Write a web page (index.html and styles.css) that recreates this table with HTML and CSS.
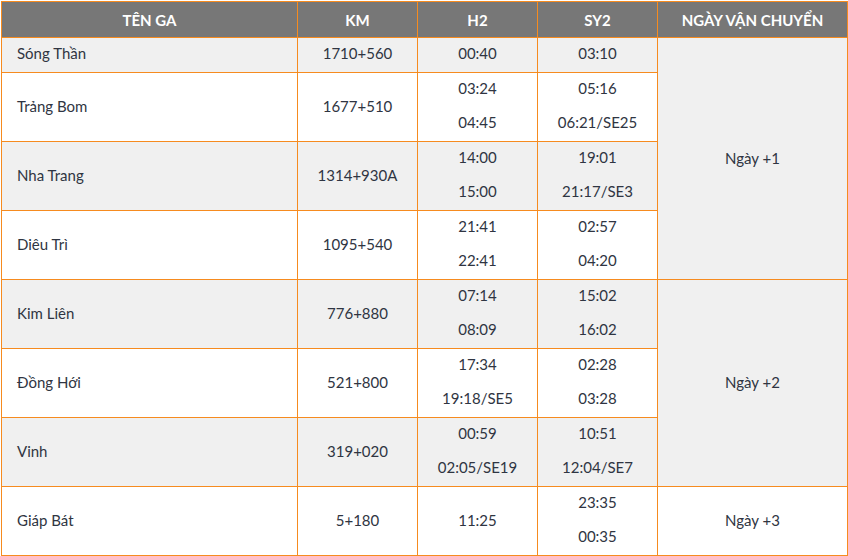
FILE: index.html
```html
<!DOCTYPE html>
<html lang="vi">
<head>
<meta charset="utf-8">
<link rel="stylesheet" href="styles.css">
</head>
<body>
<table class="schedule">
  <colgroup>
    <col class="c-name"><col class="c-km"><col class="c-t"><col class="c-t"><col class="c-day">
  </colgroup>
  <thead>
    <tr><th>TÊN GA</th><th>KM</th><th>H2</th><th>SY2</th><th>NGÀY VẬN CHUYỂN</th></tr>
  </thead>
  <tbody>
    <tr class="gray first">
      <td class="name multi"><div class="ln">Sóng Thần</div></td>
      <td class="multi"><div class="ln">1710+560</div></td>
      <td class="multi"><div class="ln">00:40</div></td>
      <td class="multi"><div class="ln">03:10</div></td>
      <td rowspan="4" class="day">Ngày +1</td>
    </tr>
    <tr>
      <td class="name">Trảng Bom</td>
      <td>1677+510</td>
      <td class="multi"><div class="ln">03:24</div><div class="ln">04:45</div></td>
      <td class="multi"><div class="ln">05:16</div><div class="ln">06:21/SE25</div></td>
    </tr>
    <tr class="gray">
      <td class="name">Nha Trang</td>
      <td>1314+930A</td>
      <td class="multi"><div class="ln">14:00</div><div class="ln">15:00</div></td>
      <td class="multi"><div class="ln">19:01</div><div class="ln">21:17/SE3</div></td>
    </tr>
    <tr>
      <td class="name">Diêu Trì</td>
      <td>1095+540</td>
      <td class="multi"><div class="ln">21:41</div><div class="ln">22:41</div></td>
      <td class="multi"><div class="ln">02:57</div><div class="ln">04:20</div></td>
    </tr>
    <tr class="gray">
      <td class="name">Kim Liên</td>
      <td>776+880</td>
      <td class="multi"><div class="ln">07:14</div><div class="ln">08:09</div></td>
      <td class="multi"><div class="ln">15:02</div><div class="ln">16:02</div></td>
      <td rowspan="3" class="day">Ngày +2</td>
    </tr>
    <tr>
      <td class="name">Đồng Hới</td>
      <td>521+800</td>
      <td class="multi"><div class="ln">17:34</div><div class="ln">19:18/SE5</div></td>
      <td class="multi"><div class="ln">02:28</div><div class="ln">03:28</div></td>
    </tr>
    <tr class="gray">
      <td class="name">Vinh</td>
      <td>319+020</td>
      <td class="multi"><div class="ln">00:59</div><div class="ln">02:05/SE19</div></td>
      <td class="multi"><div class="ln">10:51</div><div class="ln">12:04/SE7</div></td>
    </tr>
    <tr>
      <td class="name">Giáp Bát</td>
      <td>5+180</td>
      <td>11:25</td>
      <td class="multi"><div class="ln">23:35</div><div class="ln">00:35</div></td>
      <td class="day">Ngày +3</td>
    </tr>
  </tbody>
</table>
</body>
</html>
```
FILE: styles.css
```css
html, body {
  margin: 0;
  padding: 0;
  background: #fff;
}
body {
  padding: 1px 0 0 1px;
  font-family: Lato, "Noto Sans", sans-serif;
  color: #2f3542;
}
.schedule {
  border-collapse: collapse;
  width: 846px;
  table-layout: fixed;
  font-size: 15px;
}
.c-name { width: 296px; }
.c-km { width: 120px; }
.c-t { width: 120px; }
.c-day { width: 190px; }
.schedule th,
.schedule td {
  border: 1px solid #f68b1f;
  padding: 0;
  text-align: center;
  vertical-align: middle;
}
.schedule th {
  background: #777777;
  color: #fff;
  font-weight: 700;
  font-size: 15px;
  height: 35px;
  line-height: 34px;
}
.schedule td {
  height: 66px;
  padding-bottom: 2px;
  line-height: 30px;
}
.schedule td.multi {
  height: 68px;
  padding-bottom: 0;
}
.schedule tr.first td.multi {
  height: 34px;
}
.schedule td.name {
  text-align: left;
  padding-left: 15px;
}
.ln {
  height: 34px;
  line-height: 31px;
}
.gray td {
  background: #f0f0f0;
}
```
